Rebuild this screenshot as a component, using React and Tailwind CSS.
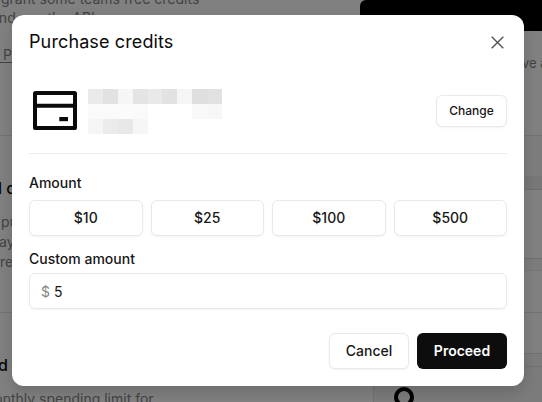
import React from "react";

const amounts = ["$10", "$25", "$100", "$500"];

const redacted = [
  ["bg-[#eaeaea]", "bg-[#e2e2e2]", "bg-[#f6f6f6]", "bg-[#e4e4e4]", "bg-[#e9e9e9]", "bg-[#e2e2e2]", "bg-[#f5f5f5]", "bg-[#dfdfdf]", "bg-[#e1e1e1]"],
  ["bg-[#fafafa]", "bg-[#fafafa]", "bg-[#fbfbfb]", "bg-[#fafafa]", "bg-white", "bg-white", "bg-white", "bg-[#f9f9f9]", "bg-[#f7f7f7]"],
  ["bg-[#f5f5f5]", "bg-[#ebebeb]", "bg-[#e8e8e8]", "bg-[#f6f6f6]", "bg-white", "bg-white", "bg-white", "bg-white", "bg-white"],
];

const outlined =
  "flex items-center justify-center border border-[#e9e9e9] bg-white font-medium shadow-[0_1px_2px_rgba(0,0,0,0.05)]";

function CardIcon() {
  return (
    <svg width="44" height="39" viewBox="0 0 44 39">
      <rect x="2" y="2" width="40" height="35" rx="0.6" fill="none" stroke="#0a0a0a" strokeWidth="4" strokeLinejoin="round" />
      <path d="M2 14.7H42" stroke="#0a0a0a" strokeWidth="4" />
      <rect x="26.3" y="26" width="8.7" height="4.2" fill="#0a0a0a" />
    </svg>
  );
}

function Backdrop() {
  return (
    <div className="flex h-[402px] w-[542px] overflow-hidden bg-[#808080] text-sm leading-5 whitespace-nowrap text-[#434343]">
      <div className="w-[360px] shrink-0">
        <div className="flex h-[136px] flex-col border-b border-[#717171]">
          <div className="-mt-[11px] ml-px">grant some teams free credits</div>
          <div className="-ml-[9px] -mt-px">and use the API</div>
          <div className="mt-[20px] border-b border-[#434343] pl-[3px] leading-[14px]">P</div>
        </div>
        <div className="flex h-[177px] flex-col border-b border-[#717171] pt-[42px]">
          <div className="-ml-[2px] text-base font-medium leading-5 text-[#060606]">l c</div>
          <div className="mt-[14px] ml-[1px]">pu</div>
          <div className="-ml-[1px]">ay</div>
          <div className="ml-0">re</div>
        </div>
        <div className="flex flex-col pt-[42px]">
          <div className="-ml-[2px] text-base font-medium leading-5 text-[#060606]">d</div>
          <div className="mt-[14px] -ml-[18px]">monthly spending limit for</div>
        </div>
      </div>
      <div className="w-[182px] shrink-0">
        <div className="h-[31px] rounded-tl-md bg-black" />
        <div className="mt-[22px] pl-[162px] text-[13px] leading-5">ve a</div>
        <div className="mt-[62px] h-[41px] border-t border-[#717171] bg-[#7d7d7d]" />
        <div className="h-[14px] border-b border-[#6e6e6e] bg-[#777777]" />
        <div className="h-[69px] border-b border-[#6e6e6e]" />
        <div className="h-[12px] border-b border-[#767676] bg-[#7c7c7c]" />
        <div className="h-[42px] border-b border-[#717171]" />
        <div className="h-[41px] border-b border-[#717171]" />
        <div className="h-[13px] border-b border-[#717171] bg-[#7b7b7b]" />
        <div className="ml-[13px] h-[40px] border-l border-[#717171] bg-[#7b7b7b] pt-5 pl-5">
          <div className="size-5 rounded-full border-4 border-black" />
        </div>
      </div>
    </div>
  );
}

export default function App() {
  return (
    <div className="relative h-[402px] w-[542px] overflow-hidden font-['Inter',sans-serif] text-[#171717]">
      <Backdrop />
      <div
        role="dialog"
        className="absolute top-[15px] left-[12px] flex h-[371px] w-[512px] flex-col rounded-xl bg-white px-[17px] pt-[15px] pb-[17px] shadow-[0_6px_14px_rgba(0,0,0,0.15)]"
      >
        <div className="flex h-6 items-center justify-between">
          <h2 className="text-[18px] leading-6 tracking-[0.12px] text-[#0a0a0a]">Purchase credits</h2>
          <button aria-label="Close" className="mt-[1px] mr-[3.5px]">
            <svg width="13" height="13" viewBox="0 0 13 13" fill="none" stroke="#525252" strokeWidth="1.4">
              <path d="M0.7 0.7L12.3 12.3M12.3 0.7L0.7 12.3" />
            </svg>
          </button>
        </div>
        <div className="mt-[35px] flex h-[45px] items-start">
          <div className="mt-[2px] ml-1">
            <CardIcon />
          </div>
          <div className="ml-[11px] grid grid-cols-[repeat(9,14.9px)] grid-rows-[repeat(3,15px)]">
            {redacted.flat().map((tone, i) => (
              <span key={i} className={tone} />
            ))}
          </div>
          <button className={`${outlined} mt-[6px] ml-auto h-8 w-[71px] rounded-md text-xs`}>Change</button>
        </div>
        <div className="mt-[18.5px] border-t border-[#ededed]" />
        <div className="mt-[19.5px] text-sm font-medium">Amount</div>
        <div className="mt-[7px] grid grid-cols-4 gap-2">
          {amounts.map((a) => (
            <button key={a} className={`${outlined} h-9 rounded-md text-sm`}>
              {a}
            </button>
          ))}
        </div>
        <div className="mt-[13px] text-sm font-medium">Custom amount</div>
        <div className="mt-[4px] flex h-9 shrink-0 items-center rounded-md border border-[#e9e9e9] pt-px pl-[11px] text-sm shadow-[0_1px_2px_rgba(0,0,0,0.05)]">
          <span className="w-[13px] text-[#858585]">$</span>
          <span>5</span>
        </div>
        <div className="mt-auto flex justify-end gap-2">
          <button className={`${outlined} h-9 w-20 rounded-md text-sm`}>Cancel</button>
          <button className="h-9 w-[90px] rounded-md bg-[#0d0d0d] text-sm font-semibold text-white">Proceed</button>
        </div>
      </div>
    </div>
  );
}
